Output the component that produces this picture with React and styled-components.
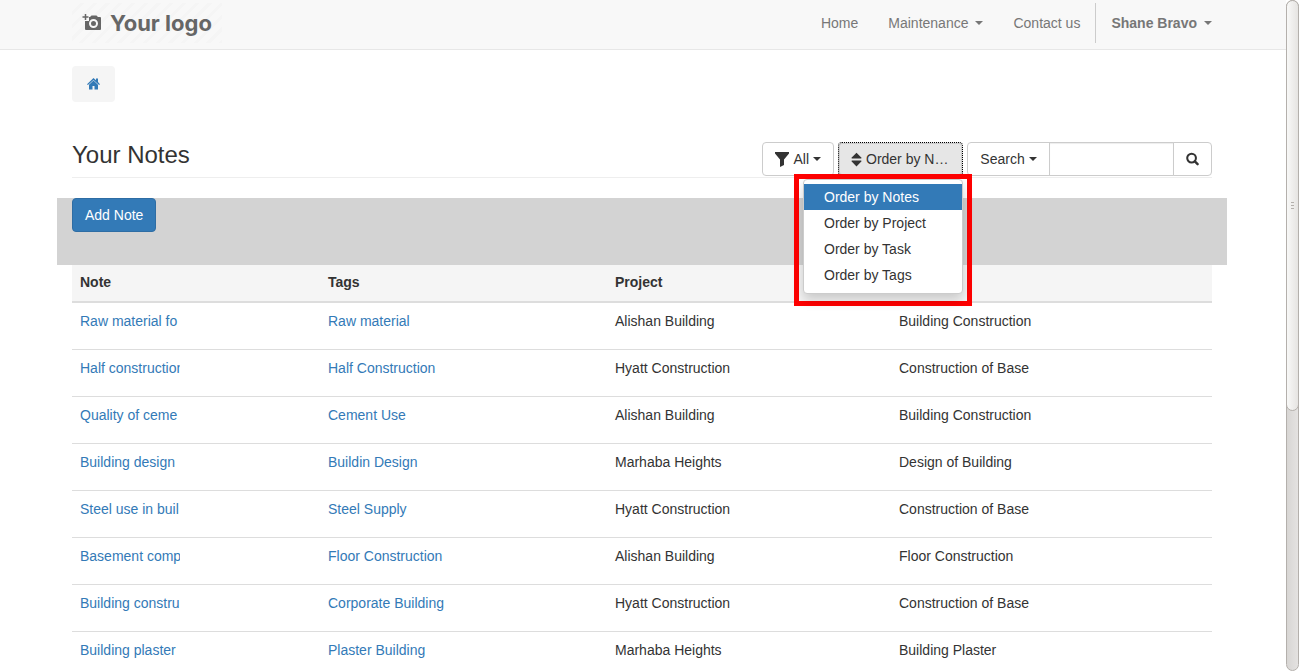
import React from "react";
import styled, { createGlobalStyle } from "styled-components";

const Global = createGlobalStyle`
  *, *::before, *::after { box-sizing: border-box; }
  body {
    margin: 0;
    background: #fff;
    color: #333;
    font: 14px/20px "Liberation Sans", Arial, sans-serif;
  }
  button, input { font: inherit; color: inherit; }
  a { color: #337ab7; text-decoration: none; }
`;

const Frame = styled.div`
  display: flex;
  height: 100vh;
`;

const Page = styled.div`
  flex: 1;
  min-width: 0;
  overflow-y: auto;
  scrollbar-width: none;
`;

const Track = styled.div`
  width: 13px;
  flex: none;
  border: 1px solid #b4b0ac;
  border-radius: 7px;
  background: linear-gradient(90deg, #d8d6d4, #e4e2e1);
`;

const Thumb = styled.div`
  display: flex;
  flex-direction: column;
  align-items: center;
  justify-content: center;
  gap: 2px;
  height: calc(61% + 3px);
  margin: -1px;
  border: 1px solid #b4b0ac;
  border-radius: 7px;
  background: linear-gradient(90deg, #f8f8f7, #e6e4e2);
`;

const Grip = styled.span`
  width: 3px;
  height: 1px;
  background: #b4b0ac;
`;

const NavBar = styled.header`
  padding-right: 2px;
  background: #f8f8f8;
  border-bottom: 1px solid #e7e7e7;
`;

const NavInner = styled.div`
  display: flex;
  justify-content: space-between;
  max-width: 1170px;
  margin: 0 auto;
  padding: 3px 0 6px 15px;
`;

const Logo = styled.a`
  display: flex;
  align-items: center;
  gap: 8px;
  width: 150px;
  height: 40px;
  padding-left: 10px;
  color: #666;
  font: 700 22px/40px Inter, sans-serif;
  white-space: nowrap;
  background: repeating-linear-gradient(135deg, #f8f8f8 0 6px, #f5f5f5 6px 9px);
`;

const NavList = styled.ul`
  display: flex;
  margin: 0;
  padding: 0;
  list-style: none;
`;

const NavItem = styled.li`
  border-left: ${(p) => (p.$divided ? "1px solid #ccc" : "0")};
  font-weight: ${(p) => (p.$divided ? "bold" : "normal")};
`;

const NavLink = styled.a`
  display: flex;
  align-items: center;
  gap: 7px;
  padding: 10px 15px;
  color: #777;
`;

const Caret = styled.span`
  border-top: 4px solid currentColor;
  border-right: 4px solid transparent;
  border-left: 4px solid transparent;
`;

const Body = styled.main`
  padding: 16px 2px 0 0;
`;

const Container = styled.div`
  max-width: 1170px;
  margin: 0 auto;
`;

const Section = styled.div`
  padding: 0 15px;
`;

const Breadcrumb = styled.nav`
  display: inline-flex;
  align-items: center;
  height: 36px;
  padding: 0 15px;
  border-radius: 4px;
  background: #f5f5f5;

  a { display: flex; }
`;

const TitleRow = styled.div`
  display: flex;
  justify-content: space-between;
  margin: 40px 15px 20px;
  padding-bottom: 1px;
  border-bottom: 1px solid #eee;
`;

const Title = styled.h1`
  margin: 0;
  font-size: 24px;
  line-height: 26px;
  font-weight: normal;
`;

const Tools = styled.div`
  display: flex;
  gap: 4px;
`;

const Button = styled.button`
  display: flex;
  align-items: center;
  justify-content: center;
  gap: 4px;
  height: 34px;
  padding: 0 12px;
  border: 1px solid ${(p) => (p.$primary ? "#2e6da4" : "#ccc")};
  border-radius: 4px;
  background: ${(p) => (p.$primary ? "#337ab7" : "#fff")};
  color: ${(p) => (p.$primary ? "#fff" : "#333")};
  white-space: nowrap;
  cursor: pointer;
`;

const OpenButton = styled(Button)`
  justify-content: flex-start;
  width: 125px;
  border: 1px dotted #000;
  background: #e6e6e6;
  box-shadow: inset 0 0 0 1px #ccc;
`;

const DropDown = styled.div`
  position: relative;
`;

const Highlight = styled.div`
  position: absolute;
  z-index: 2;
  top: 32px;
  right: -9px;
  padding: 0 4px 7px;
  border: 5px solid #f00;
`;

const Menu = styled.ul`
  width: 160px;
  margin: 0;
  padding: 4px 0 5px;
  border: 1px solid #ccc;
  border-radius: 4px;
  background: #fff;
  box-shadow: 0 6px 12px rgba(0, 0, 0, 0.18);
  list-style: none;
`;

const MenuLink = styled.a`
  display: block;
  padding: 3px 20px;
  background: ${(p) => (p.$active ? "#337ab7" : "transparent")};
  color: ${(p) => (p.$active ? "#fff" : "#333")};
`;

const SearchGroup = styled.form`
  display: flex;
  width: 245px;
`;

const ScopeButton = styled(Button)`
  width: 83px;
  border-radius: 4px 0 0 4px;
`;

const SearchInput = styled.input`
  flex: 1;
  min-width: 0;
  height: 34px;
  margin: 0 -1px;
  padding: 6px 12px;
  border: 1px solid #ccc;
  box-shadow: inset 0 1px 1px rgba(0, 0, 0, 0.075);
`;

const SubmitButton = styled(Button)`
  width: 39px;
  border-radius: 0 4px 4px 0;
`;

const ActionBand = styled.div`
  height: 67px;
  padding: 0 15px;
  background: #d3d3d3;
`;

const Table = styled.table`
  width: 100%;
  table-layout: fixed;
  border-collapse: separate;
  border-spacing: 0;
`;

const Col = styled.col`
  width: ${(p) => p.$width};
`;

const HeadCell = styled.th`
  height: 38px;
  padding: 7px 8px 9px;
  border-bottom: 2px solid #ddd;
  background: #f5f5f5;
  text-align: left;
`;

const Cell = styled.td`
  height: 47px;
  padding: 8px;
  border-bottom: 1px solid #ddd;
  vertical-align: top;
`;

const NoteLink = styled.a`
  display: block;
  width: 100px;
  overflow: hidden;
  white-space: nowrap;
`;

const CameraIcon = () => (
  <svg width="20" height="19" viewBox="0 0 20 19" fill="none" aria-hidden="true">
    <path
      fill="#666"
      fillRule="evenodd"
      d="M7 3h1l1.500-1.500h5L16 3h2q1 0 1 1v11q0 1-1 1H4q-1 0-1-1V7h4zM11.500 5a4.500 4.500 0 1 0 0 9a4.500 4.500 0 0 0 0-9zM11.500 7a2.500 2.500 0 1 1 0 5a2.500 2.500 0 0 1 0-5z"
    />
    <path stroke="#666" strokeWidth="1.500" d="M3.500 0v6M.5 3h6" />
  </svg>
);

const HomeIcon = () => (
  <svg width="13" height="12" viewBox="0 0 13 12" fill="currentColor" aria-hidden="true">
    <path d="M6.500 0L9 2.200V.5h2v3.500l2 2.200-.9.9L6.500 1.900.9 7.100 0 6.200z" />
    <path d="M6.500 2.500L11 6.700v4.800H7.500V8h-2v3.500H2V6.700z" />
  </svg>
);

const FilterIcon = () => (
  <svg width="14" height="15" viewBox="0 0 14 15" fill="currentColor" aria-hidden="true">
    <path d="M0 0h14v1.500L9 7.500V13L5 15V7.500L0 1.500z" />
  </svg>
);

const SortIcon = () => (
  <svg width="11" height="15" viewBox="0 0 12 15" fill="currentColor" aria-hidden="true">
    <path d="M6 0l5.500 5.600q.2.900-.7.900H1.200q-.9 0-.7-.9zM6 15L.5 9.400q-.2-.9.700-.9h9.600q.9 0 .7.900z" />
  </svg>
);

const SearchIcon = () => (
  <svg width="14" height="14" viewBox="0 0 14 14" fill="none" stroke="currentColor" aria-hidden="true">
    <circle cx="6" cy="6" r="4.700" strokeWidth="2.200" />
    <path d="M9.500 9.500l3 3" strokeWidth="2.600" strokeLinecap="round" />
  </svg>
);

const orders = ["Notes", "Project", "Task", "Tags"];
const columns = [
  { key: "note", title: "Note", width: "248px" },
  { key: "tags", title: "Tags", width: "287px" },
  { key: "project", title: "Project", width: "284px" },
  { key: "task", title: "", width: "auto" },
];
const notes = [
  ["Raw material fo", "Raw material", "Alishan Building", "Building Construction"],
  ["Half construction", "Half Construction", "Hyatt Construction", "Construction of Base"],
  ["Quality of ceme", "Cement Use", "Alishan Building", "Building Construction"],
  ["Building design", "Buildin Design", "Marhaba Heights", "Design of Building"],
  ["Steel use in buil", "Steel Supply", "Hyatt Construction", "Construction of Base"],
  ["Basement comp", "Floor Construction", "Alishan Building", "Floor Construction"],
  ["Building constru", "Corporate Building", "Hyatt Construction", "Construction of Base"],
  ["Building plaster", "Plaster Building", "Marhaba Heights", "Building Plaster"],
];

export default function App() {
  return (
    <Frame>
      <Global />
      <Page>
        <NavBar>
          <NavInner>
            <Logo href="#">
              <CameraIcon />
              Your logo
            </Logo>
            <NavList>
              <NavItem><NavLink href="#">Home</NavLink></NavItem>
              <NavItem><NavLink href="#">Maintenance <Caret /></NavLink></NavItem>
              <NavItem><NavLink href="#">Contact us</NavLink></NavItem>
              <NavItem $divided><NavLink href="#">Shane Bravo <Caret /></NavLink></NavItem>
            </NavList>
          </NavInner>
        </NavBar>
        <Body>
          <Container>
            <Section>
              <Breadcrumb aria-label="Breadcrumb">
                <a href="#" aria-label="Home"><HomeIcon /></a>
              </Breadcrumb>
            </Section>
            <TitleRow>
              <Title>Your Notes</Title>
              <Tools>
                <Button type="button"><FilterIcon />All<Caret /></Button>
                <DropDown>
                  <OpenButton type="button" aria-expanded="true"><SortIcon />Order by N…</OpenButton>
                  <Highlight>
                    <Menu>
                      {orders.map((name, i) => (
                        <li key={name}>
                          <MenuLink href="#" $active={i === 0}>Order by {name}</MenuLink>
                        </li>
                      ))}
                    </Menu>
                  </Highlight>
                </DropDown>
                <SearchGroup>
                  <ScopeButton type="button">Search<Caret /></ScopeButton>
                  <SearchInput type="text" aria-label="Search notes" />
                  <SubmitButton type="submit" aria-label="Search"><SearchIcon /></SubmitButton>
                </SearchGroup>
              </Tools>
            </TitleRow>
            <ActionBand>
              <Button type="button" $primary>Add Note</Button>
            </ActionBand>
            <Section>
              <Table>
                <colgroup>
                  {columns.map(({ key, width }) => <Col key={key} $width={width} />)}
                </colgroup>
                <thead>
                  <tr>
                    {columns.map(({ key, title }) => <HeadCell key={key} scope="col">{title}</HeadCell>)}
                  </tr>
                </thead>
                <tbody>
                  {notes.map(([note, tag, project, task]) => (
                    <tr key={note}>
                      <Cell><NoteLink href="#">{note}</NoteLink></Cell>
                      <Cell><a href="#">{tag}</a></Cell>
                      <Cell>{project}</Cell>
                      <Cell>{task}</Cell>
                    </tr>
                  ))}
                </tbody>
              </Table>
            </Section>
          </Container>
        </Body>
      </Page>
      <Track aria-hidden="true">
        <Thumb><Grip /><Grip /><Grip /></Thumb>
      </Track>
    </Frame>
  );
}
